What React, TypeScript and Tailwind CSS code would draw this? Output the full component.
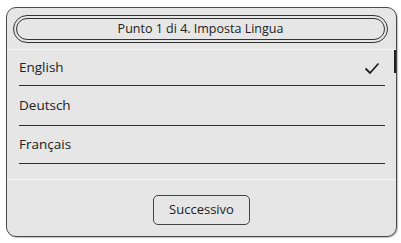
import React from "react";

const font = { fontFamily: '"Open Sans", "Noto Sans", sans-serif' };

function Row({ label, h, checked }: { label: string; h: string; checked?: boolean }) {
  return (
    <div className={`flex items-center justify-between ml-[12px] mr-[11px] border-b border-[#2e2e2e] ${h}`}>
      <span className="text-[13.5px] text-[#222]">{label}</span>
      {checked && (
        <svg width="16" height="13" viewBox="0 0 16 13" className="mr-[5px] mt-[1px]">
          <path d="M1.5 6.5 L6 11 L14.5 1.5" fill="none" stroke="#222" strokeWidth="1.8" />
        </svg>
      )}
    </div>
  );
}

export default function App() {
  return (
    <div className="w-[401px] h-[243px] bg-white pt-[7px] pl-[6px]" style={font}>
      <div className="relative w-[391px] h-[230px] border border-[#4a4a4a] rounded-[10px] bg-[#e5e6e5] flex flex-col shadow-[1px_1px_1px_rgba(0,0,0,0.25)]">
        <div className="pt-[7px] pl-[6px] pr-[8px] pb-[6px]">
          <div className="h-[28px] rounded-full border border-[#333] p-[2px]">
            <div className="h-full rounded-full border border-[#333] flex items-center justify-center text-[12.5px] text-[#222]">
              Punto 1 di 4. Imposta Lingua
            </div>
          </div>
        </div>
        <div className="h-[1px] bg-[#f6f6f6]" />
        <div className="h-[129px]">
          <Row label="English" h="h-[36px]" checked />
          <Row label="Deutsch" h="h-[40px]" />
          <Row label="Français" h="h-[38px]" />
        </div>
        <div className="h-[1px] bg-[#f6f6f6]" />
        <div className="flex-1 flex items-start justify-center pt-[15px]">
          <div className="w-[97px] h-[30px] border border-[#444] rounded-[5px] flex items-center justify-center text-[13px] text-[#222]">
            Successivo
          </div>
        </div>
        <div className="absolute left-[387px] top-[42px] w-[2px] h-[23px] bg-[#222]" />
      </div>
    </div>
  );
}
